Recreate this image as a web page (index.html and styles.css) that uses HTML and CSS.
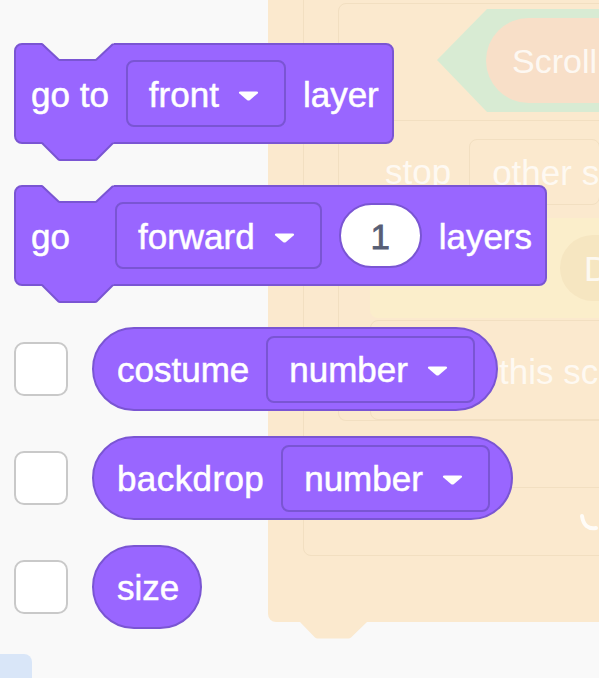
FILE: index.html
```html
<!DOCTYPE html>
<html lang="en">
  <head>
    <meta charset="UTF-8" />
    <meta name="viewport" content="width=device-width, initial-scale=1.0" />
    <title>Looks blocks</title>
    <link rel="stylesheet" href="styles.css">
  </head>
  <body>
    <!-- faded script being dragged behind the palette -->
    <div class="ghost">
      <div class="g-outer">
        <svg class="g-tab" width="67" height="18" viewBox="0 0 67 18">
          <path d="M0 0 H67 L51 15.5 Q50 16.5 48.5 16.5 H17.5 Q16 16.5 15 15.5 Z" fill="#fbe9ce" />
        </svg>
      </div>
      <div class="g-box g-arm"></div>
      <div class="g-box g-if"></div>
      <div class="g-box g-inner"></div>
      <svg class="g-hex" width="170" height="104" viewBox="0 0 170 104">
        <polygon points="0,51 50,0 170,0 170,103 50,103" fill="#d8ebd3" />
      </svg>
      <div class="g-pill">Scroll</div>
      <div class="g-box g-stop">
        <span class="g-text">stop</span>
        <span class="g-drop">other s</span>
      </div>
      <div class="g-yellow"><span class="g-dpill">D</span></div>
      <div class="g-box g-this"><span class="g-text">this scr</span></div>
      <div class="g-box g-low"></div>
      <svg class="g-loop" width="30" height="30" viewBox="0 0 30 30">
        <path d="M4 8 Q6 22 18 20" fill="none" stroke="#fff" stroke-opacity="0.85" stroke-width="4" stroke-linecap="round" />
      </svg>
    </div>

    <div class="palette">
      <div class="stack">
        <svg class="notch" width="72" height="19" viewBox="0 0 72 19">
          <path d="M0 0 H72 L54.5 16.5 Q54 17 53 17 H18 Q17 17 16.5 16.5 Z" fill="#f9f9f9" />
          <path d="M0 1 L16.5 16.5 Q17 17 18 17 H53 Q54 17 54.5 16.5 L71 1" fill="none" stroke="#7a55d3" stroke-width="2" />
        </svg>
        <span class="label">go to</span>
        <span class="dropdown">front
          <svg class="arrow" width="21" height="10" viewBox="0 0 21 10"><path d="M2.5 0.5 H18.5 Q21 0.5 19.6 2.4 L12 9 Q10.5 10.2 9 9 L1.4 2.4 Q0 0.5 2.5 0.5 Z" fill="#fff" /></svg>
        </span>
        <span class="label">layer</span>
        <svg class="tab" width="72" height="20" viewBox="0 0 72 20">
          <path d="M0 0 H72 L54.5 17.5 Q54 18 53 18 H18 Q17 18 16.5 17.5 Z" fill="#9966ff" />
          <path d="M0 1 L16.5 17.5 Q17 18 18 18 H53 Q54 18 54.5 17.5 L71 1" fill="none" stroke="#7a55d3" stroke-width="2" />
        </svg>
      </div>

      <div class="stack">
        <svg class="notch" width="72" height="19" viewBox="0 0 72 19">
          <path d="M0 0 H72 L54.5 16.5 Q54 17 53 17 H18 Q17 17 16.5 16.5 Z" fill="#f9f9f9" />
          <path d="M0 1 L16.5 16.5 Q17 17 18 17 H53 Q54 17 54.5 16.5 L71 1" fill="none" stroke="#7a55d3" stroke-width="2" />
        </svg>
        <span class="label label-wide">go</span>
        <span class="dropdown">forward
          <svg class="arrow" width="21" height="10" viewBox="0 0 21 10"><path d="M2.5 0.5 H18.5 Q21 0.5 19.6 2.4 L12 9 Q10.5 10.2 9 9 L1.4 2.4 Q0 0.5 2.5 0.5 Z" fill="#fff" /></svg>
        </span>
        <span class="number">1</span>
        <span class="label">layers</span>
        <svg class="tab" width="72" height="20" viewBox="0 0 72 20">
          <path d="M0 0 H72 L54.5 17.5 Q54 18 53 18 H18 Q17 18 16.5 17.5 Z" fill="#9966ff" />
          <path d="M0 1 L16.5 17.5 Q17 18 18 18 H53 Q54 18 54.5 17.5 L71 1" fill="none" stroke="#7a55d3" stroke-width="2" />
        </svg>
      </div>

      <div class="row">
        <span class="check"></span>
        <div class="reporter">
          <span class="label">costume</span>
          <span class="dropdown">number
            <svg class="arrow" width="21" height="10" viewBox="0 0 21 10"><path d="M2.5 0.5 H18.5 Q21 0.5 19.6 2.4 L12 9 Q10.5 10.2 9 9 L1.4 2.4 Q0 0.5 2.5 0.5 Z" fill="#fff" /></svg>
          </span>
        </div>
      </div>

      <div class="row">
        <span class="check"></span>
        <div class="reporter">
          <span class="label label-loose">backdrop</span>
          <span class="dropdown">number
            <svg class="arrow" width="21" height="10" viewBox="0 0 21 10"><path d="M2.5 0.5 H18.5 Q21 0.5 19.6 2.4 L12 9 Q10.5 10.2 9 9 L1.4 2.4 Q0 0.5 2.5 0.5 Z" fill="#fff" /></svg>
          </span>
        </div>
      </div>

      <div class="row">
        <span class="check"></span>
        <div class="reporter">
          <span class="label">size</span>
        </div>
      </div>
    </div>

    <div class="category-tab"></div>
  </body>
</html>
```

FILE: styles.css
```css
html,
body {
  margin: 0;
  width: 599px;
  height: 678px;
  overflow: hidden;
}
body {
  position: relative;
  background-color: #f9f9f9;
  font-family: "Liberation Sans", Arial, sans-serif;
  font-size: 35px;
  color: white;
}

/* ghost script */
.ghost {
  position: absolute;
  inset: 0;
  overflow: hidden;
}
.g-outer {
  position: absolute;
  left: 268px;
  top: -20px;
  width: 360px;
  height: 642px;
  background-color: #fbe9ce;
  border-radius: 0 0 0 8px;
}
.g-tab {
  position: absolute;
  left: 32px;
  top: 100%;
}
.g-box {
  position: absolute;
  border: 1px solid #f2dfc1;
  border-radius: 8px;
}
.g-arm {
  left: 303px;
  top: -20px;
  width: 320px;
  height: 574px;
}
.g-if {
  left: 338px;
  top: 3px;
  width: 290px;
  height: 116px;
}
.g-inner {
  left: 338px;
  top: 120px;
  width: 290px;
  height: 300px;
  border-top: none;
}
.g-hex {
  position: absolute;
  left: 437px;
  top: 9px;
}
.g-pill {
  position: absolute;
  left: 486px;
  top: 18px;
  width: 160px;
  height: 85px;
  box-sizing: border-box;
  padding-left: 26px;
  border-radius: 43px;
  background-color: #f8dfc8;
  color: rgba(255, 255, 255, 0.8);
  font-size: 34px;
  line-height: 87px;
}
.g-text {
  color: rgba(255, 255, 255, 0.75);
  white-space: nowrap;
}
.g-stop {
  left: 370px;
  top: 124px;
  width: 260px;
  height: 95px;
  display: flex;
  align-items: center;
  gap: 18px;
  padding-left: 14px;
  box-sizing: border-box;
  border-color: transparent;
}
.g-drop {
  border: 1px solid #f2dfc1;
  border-radius: 8px;
  height: 64px;
  line-height: 66px;
  padding-left: 22px;
  color: rgba(255, 255, 255, 0.75);
  white-space: nowrap;
}
.g-yellow {
  position: absolute;
  left: 370px;
  top: 218px;
  width: 260px;
  height: 100px;
  background-color: #fbeecb;
  border-radius: 8px 0 0 8px;
  display: flex;
  align-items: center;
}
.g-dpill {
  margin-left: 190px;
  height: 66px;
  width: 90px;
  border-radius: 33px;
  background-color: #f6e6c1;
  color: rgba(255, 255, 255, 0.8);
  line-height: 68px;
  padding-left: 24px;
  box-sizing: border-box;
}
.g-this {
  left: 370px;
  top: 320px;
  width: 260px;
  height: 100px;
  display: flex;
  align-items: center;
  padding: 4px 0 0 128px;
  box-sizing: border-box;
}
.g-low {
  left: 303px;
  top: 487px;
  width: 320px;
  height: 67px;
  border-bottom: none;
  border-left: none;
  border-radius: 0;
}
.g-loop {
  position: absolute;
  left: 578px;
  top: 508px;
}

/* block palette */
.palette {
  position: relative;
  padding: 43px 0 0 14px;
  -webkit-text-stroke: 0.5px currentColor;
}
.stack {
  position: relative;
  display: inline-flex;
  align-items: center;
  gap: 17px;
  height: 101px;
  box-sizing: border-box;
  padding: 3px 13px 0 15px;
  margin-bottom: 41px;
  background-color: #9966ff;
  border: 2px solid #7a55d3;
  border-radius: 8px;
  vertical-align: top;
}
.notch {
  position: absolute;
  left: 26px;
  top: -2px;
  overflow: visible;
}
.tab {
  position: absolute;
  left: 26px;
  top: 100%;
  overflow: visible;
}
.label {
  white-space: nowrap;
}
.label-wide {
  margin-right: 28px;
}
.label-loose {
  letter-spacing: 0.4px;
}
.dropdown {
  display: inline-flex;
  align-items: center;
  gap: 19px;
  height: 67px;
  box-sizing: border-box;
  padding: 2px 25px 0 21px;
  border: 2px solid #7a55d3;
  border-radius: 8px;
  background-color: #9966ff;
  white-space: nowrap;
}
.stack .dropdown {
  margin-top: -3px;
}
.arrow {
  margin-top: 2px;
}
.number {
  display: inline-flex;
  align-items: center;
  justify-content: center;
  width: 83px;
  height: 65px;
  box-sizing: border-box;
  padding-top: 2px;
  margin-top: -3px;
  border: 2px solid #7a55d3;
  border-radius: 33px;
  background-color: white;
  color: #575e75;
  -webkit-text-stroke: 0.8px #575e75;
}
.row {
  display: flex;
  align-items: center;
  gap: 24px;
  margin-bottom: 25px;
}
.row:last-child {
  margin-bottom: 0;
}
.check {
  width: 54px;
  height: 54px;
  box-sizing: border-box;
  border: 2px solid #c9c9c9;
  border-radius: 10px;
  background-color: white;
}
.reporter {
  display: flex;
  align-items: center;
  gap: 17px;
  height: 84px;
  box-sizing: border-box;
  padding: 2px 21px 0 23px;
  background-color: #9966ff;
  border: 2px solid #7a55d3;
  border-radius: 42px;
}
.reporter .dropdown {
  margin-top: -2px;
  padding-right: 25px;
}
.category-tab {
  margin-top: 25px;
  width: 32px;
  height: 30px;
  background-color: #d9e6f8;
  border-radius: 0 8px 0 0;
}
```
